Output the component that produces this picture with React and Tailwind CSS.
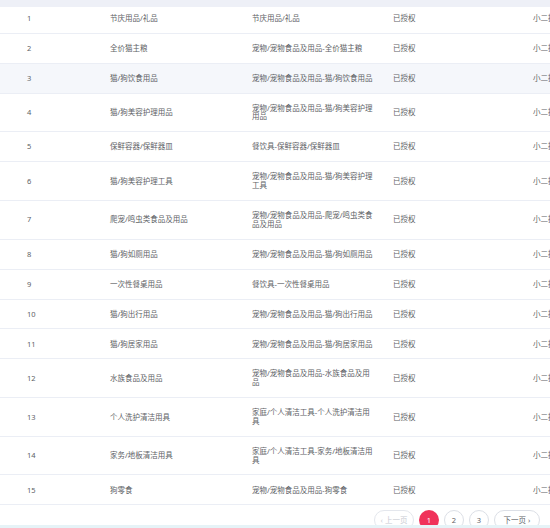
import React from "react";

const rows = [
  ["1", "节庆用品/礼品", "节庆用品/礼品"],
  ["2", "全价猫主粮", "宠物/宠物食品及用品-全价猫主粮"],
  ["3", "猫/狗饮食用品", "宠物/宠物食品及用品-猫/狗饮食用品"],
  ["4", "猫/狗美容护理用品", "宠物/宠物食品及用品-猫/狗美容护理用品"],
  ["5", "保鲜容器/保鲜器皿", "餐饮具-保鲜容器/保鲜器皿"],
  ["6", "猫/狗美容护理工具", "宠物/宠物食品及用品-猫/狗美容护理工具"],
  ["7", "爬宠/鸣虫类食品及用品", "宠物/宠物食品及用品-爬宠/鸣虫类食品及用品"],
  ["8", "猫/狗如厕用品", "宠物/宠物食品及用品-猫/狗如厕用品"],
  ["9", "一次性餐桌用品", "餐饮具-一次性餐桌用品"],
  ["10", "猫/狗出行用品", "宠物/宠物食品及用品-猫/狗出行用品"],
  ["11", "猫/狗居家用品", "宠物/宠物食品及用品-猫/狗居家用品"],
  ["12", "水族食品及用品", "宠物/宠物食品及用品-水族食品及用品"],
  ["13", "个人洗护清洁用具", "家庭/个人清洁工具-个人洗护清洁用具"],
  ["14", "家务/地板清洁用具", "家庭/个人清洁工具-家务/地板清洁用具"],
  ["15", "狗零食", "宠物/宠物食品及用品-狗零食"],
];

export default function App() {
  return (
    <div
      className="w-[550px] h-[528px] overflow-hidden bg-white relative text-[7.5px] leading-[8.75px] text-[#606266]"
      style={{ fontFamily: '"Noto Sans", "Noto Sans CJK SC", sans-serif' }}
    >
      <div className="w-[760px]">
        <div className="h-[7px] bg-[#eef0f7]" />
        {rows.map((r, i) => (
          <div
            key={i}
            className={`flex items-center border-b border-[#ebeef5] ${i === 2 ? "bg-[#f5f7fb]" : "bg-white"} ${i === 0 ? "pt-[7px] pb-[10px]" : "py-[10.1px]"}`}
          >
            <div className="w-[110px] pl-[27px] shrink-0">{r[0]}</div>
            <div className="w-[142px] shrink-0">{r[1]}</div>
            <div className="w-[141px] shrink-0">
              <div className="w-[123px]">{r[2]}</div>
            </div>
            <div className="w-[140px] shrink-0">已授权</div>
            <div className="w-[200px] shrink-0">小二操作</div>
          </div>
        ))}
      </div>
      <div className="w-[550px] flex justify-end items-center gap-[5px] pr-[10px] pt-[5px]">
        <div className="h-[20px] w-[40px] rounded-full border border-[#e4e7ed] flex items-center justify-center text-[#c8cbd2]">
          ‹ 上一页
        </div>
        <div className="h-[20px] w-[20px] rounded-full bg-[#f0325a] text-white flex items-center justify-center">
          1
        </div>
        <div className="h-[20px] w-[20px] rounded-full border border-[#dcdfe6] flex items-center justify-center">
          2
        </div>
        <div className="h-[20px] w-[20px] rounded-full border border-[#dcdfe6] flex items-center justify-center">
          3
        </div>
        <div className="h-[20px] w-[46px] rounded-full border border-[#dcdfe6] flex items-center justify-center">
          下一页 ›
        </div>
      </div>
      <div className="absolute left-0 right-0 bottom-0 h-[3.5px] bg-[#e6f3f7]" />
    </div>
  );
}
